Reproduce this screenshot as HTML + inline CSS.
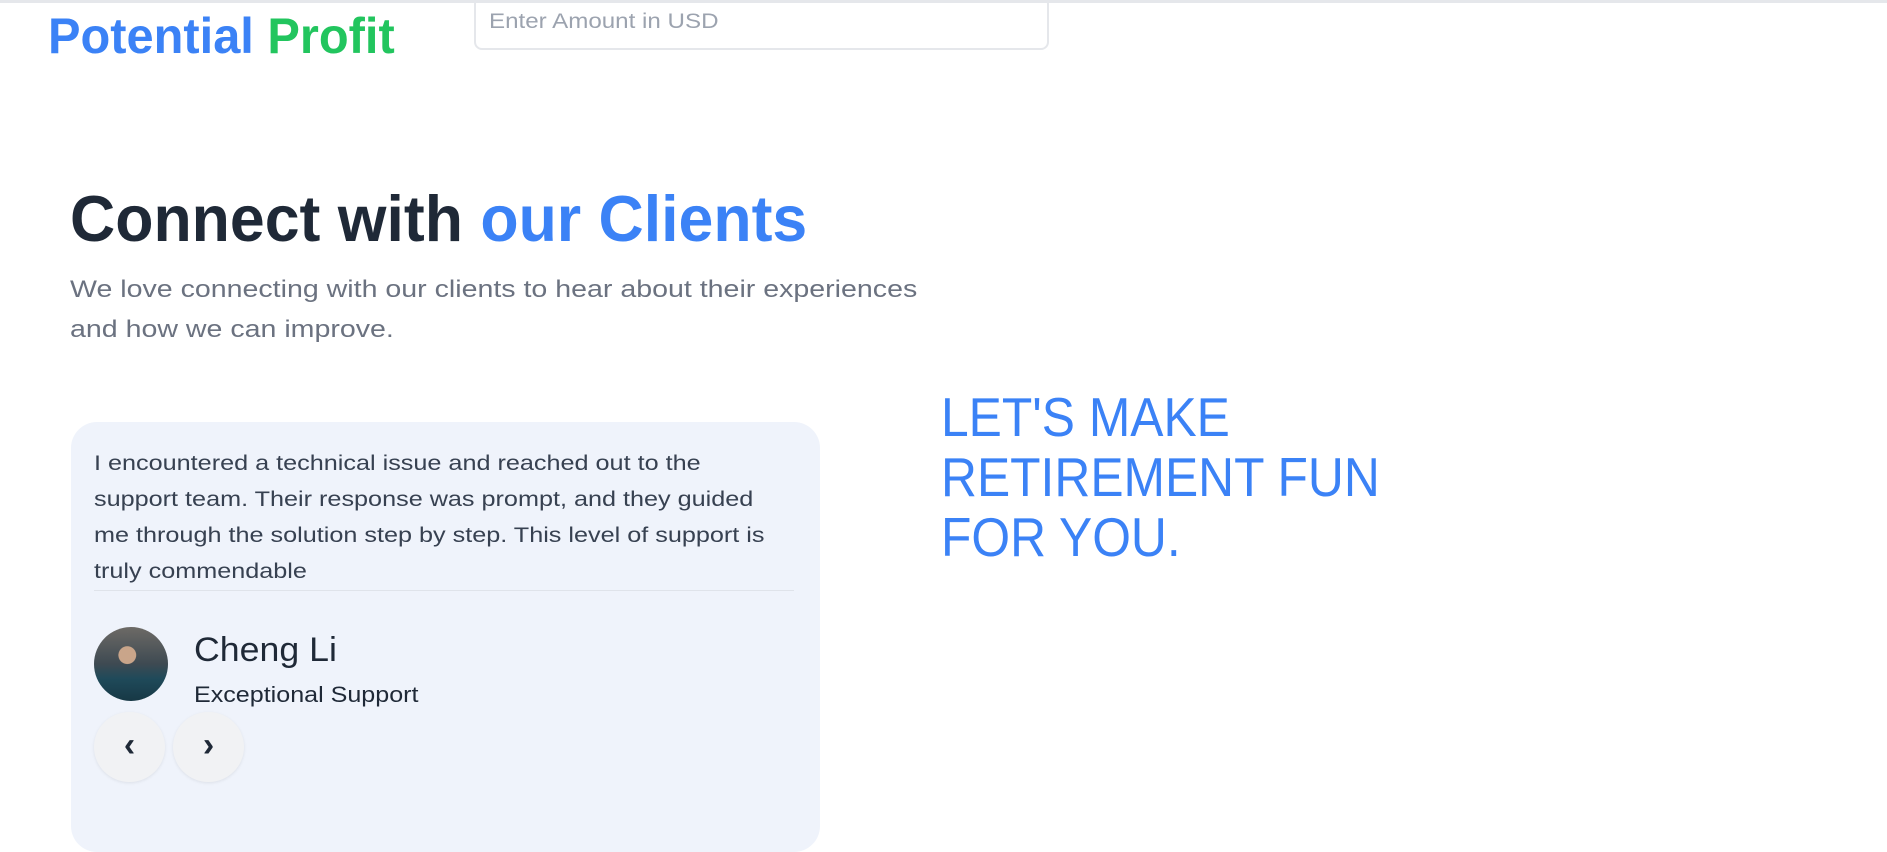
<!DOCTYPE html>
<html><head><meta charset="utf-8"><style>
*{margin:0;padding:0;box-sizing:border-box}
html,body{width:1887px;height:835px;overflow:hidden;background:#fff;font-family:"Liberation Sans",sans-serif}
.a{position:absolute;white-space:nowrap}
.sx{display:inline-block;transform-origin:left top}
</style></head><body>
<div class="a" style="left:0;top:0;width:1887px;height:3px;background:#e5e7eb"></div>
<div class="a" style="left:48px;top:8px;font-size:50px;font-weight:bold;line-height:56px"><span class="sx" style="transform:scaleX(0.975)"><span style="color:#3b82f6">Potential</span> <span style="color:#22c55e">Profit</span></span></div>
<div class="a" style="left:474px;top:-4px;width:575px;height:54px;border:2px solid #e5e7eb;border-radius:8px"></div>
<div class="a" style="left:489px;top:9px;font-size:21px;color:#9ca3af;line-height:26px"><span class="sx" style="transform:scaleX(1.15)">Enter Amount in USD</span></div>

<div class="a" style="left:70px;top:182px;font-size:65px;font-weight:bold;line-height:74px;color:#1f2937"><span class="sx" style="transform:scaleX(0.963)">Connect with <span style="color:#3b82f6">our Clients</span></span></div>
<div class="a" style="left:70px;top:270px;font-size:24px;line-height:40px;color:#6b7280"><span class="sx" style="transform:scaleX(1.19)">We love connecting with our clients to hear about their experiences<br>and how we can improve.</span></div>

<div class="a" style="left:71px;top:422px;width:749px;height:430px;background:#eff3fb;border-radius:26px"></div>
<div class="a" style="left:94px;top:446px;font-size:21px;line-height:36px;color:#374151"><span class="sx" style="transform:scaleX(1.2)">I encountered a technical issue and reached out to the<br>support team. Their response was prompt, and they guided<br>me through the solution step by step. This level of support is<br>truly commendable</span></div>
<div class="a" style="left:94px;top:590px;width:700px;height:1px;background:#dfe3ea"></div>
<div class="a" style="left:94px;top:627px;width:74px;height:74px;border-radius:50%;background:radial-gradient(circle at 45% 38%,#c9a58a 0 14%,transparent 15%),linear-gradient(180deg,#6d6a66 0%,#3e4a52 50%,#1f4a5a 70%,#173845 100%)"></div>
<div class="a" style="left:194px;top:628px;font-size:34px;line-height:44px;color:#1f2937"><span class="sx" style="transform:scaleX(1.05)">Cheng Li</span></div>
<div class="a" style="left:194px;top:680px;font-size:22px;line-height:30px;color:#1f2937"><span class="sx" style="transform:scaleX(1.14)">Exceptional Support</span></div>
<div class="a" style="left:94px;top:712px;width:71px;height:70px;border-radius:50%;background:#f1f2f4;box-shadow:0 1px 3px rgba(0,0,0,.08);text-align:center;line-height:66px;font-size:34px;font-weight:bold;color:#1f2937">‹</div>
<div class="a" style="left:173px;top:712px;width:71px;height:70px;border-radius:50%;background:#f1f2f4;box-shadow:0 1px 3px rgba(0,0,0,.08);text-align:center;line-height:66px;font-size:34px;font-weight:bold;color:#1f2937">›</div>

<div class="a" style="left:941px;top:387px;font-size:55px;line-height:60px;color:#3b82f6"><span class="sx" style="transform:scaleX(0.905)">LET'S MAKE<br>RETIREMENT FUN<br>FOR YOU.</span></div>
</body></html>
